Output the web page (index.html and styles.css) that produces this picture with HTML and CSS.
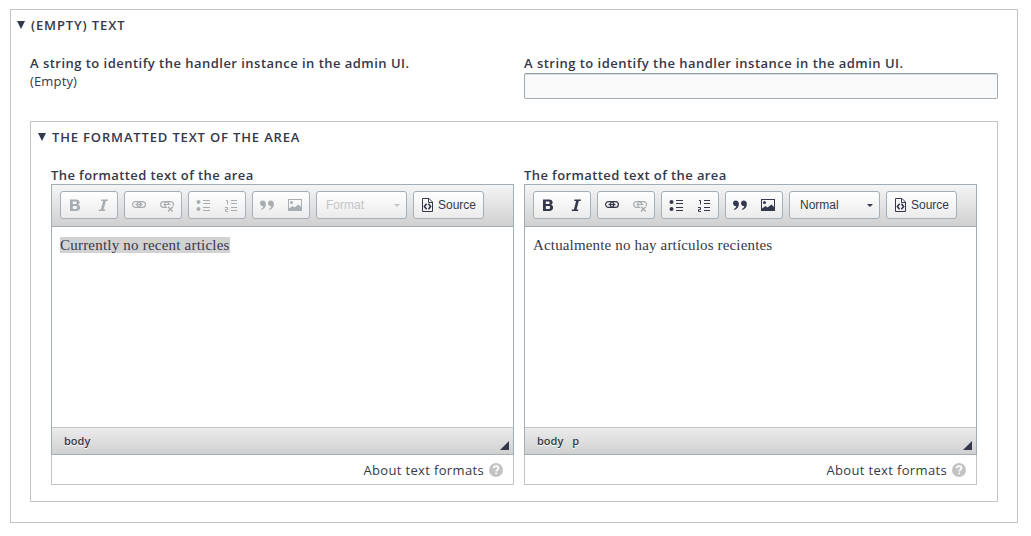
FILE: index.html
```html
<!DOCTYPE html>
<html lang="en">
<head>
<meta charset="utf-8">
<title>Translate view</title>
<link rel="stylesheet" href="styles.css">
</head>
<body>
<svg class="sprite" width="0" height="0">
  <symbol id="bold" viewBox="0 0 16 16"><path fill-rule="evenodd" d="M3 2.500h6c2.400 0 3.600 1.100 3.600 2.900 0 1.200-.6 2-1.600 2.400 1.400.4 2.100 1.400 2.100 2.700 0 2.100-1.500 3.500-4 3.500H3zM5.800 4.600V7h2.400c1 0 1.500-.4 1.500-1.200s-.5-1.200-1.500-1.200zM5.800 9v2.900h2.600c1.100 0 1.700-.5 1.700-1.500S9.500 9 8.400 9z"/></symbol>
  <symbol id="italic" viewBox="0 0 16 16"><path d="M6.500 2.500h6.500l-.4 1.500h-1.800L8.600 12.500h1.800L10 14H3.600l.4-1.500h1.900L8.100 4H6.100z"/></symbol>
  <symbol id="link" viewBox="0 0 16 16"><g fill="none" stroke="currentColor" stroke-width="1.200"><rect x="1.600" y="4.600" width="8.200" height="5.800" rx="2.900"/><rect x="6.200" y="4.600" width="8.200" height="5.800" rx="2.900"/><path d="M4.500 7.500h7"/></g></symbol>
  <symbol id="unlink" viewBox="0 0 16 16"><g fill="none" stroke="currentColor" stroke-width="1.200"><path d="M8 10.400H4.500a2.900 2.900 0 0 1 0-5.800h2.600a2.900 2.900 0 0 1 2.700 2.900M6.500 9.500A2.900 2.900 0 0 1 9.100 4.600h2.600a2.900 2.900 0 0 1 2.300 4.600M4.500 7.500h7"/><path d="M9 9.800l4.700 4.700M13.700 9.800L9 14.500" stroke-width="1.500"/></g></symbol>
  <symbol id="bullets" viewBox="0 0 16 16"><circle cx="3.500" cy="5" r="2"/><circle cx="3.500" cy="12" r="2"/><path d="M8 3h7v1H8zM8 6h7v1H8zM8 10h7v1H8zM8 13h7v1H8z"/></symbol>
  <symbol id="numbers" viewBox="0 0 16 16"><path d="M8 3h6v1H8zM8 6h6v1H8zM8 10h6v1H8zM8 13h6v1H8z"/><path d="M3 3.500h1.500v4M2 10.500h2.500v2h-2v2H5" fill="none" stroke="currentColor"/></symbol>
  <symbol id="quote" viewBox="0 0 16 16"><path d="M3.700 3.500c1.900 0 3.200 1.300 3.200 3.500 0 2.900-1.700 5-4.500 6l-.5-.9c1.400-.7 2.200-1.600 2.400-2.800C2.500 9.300 1 8.200 1 6.300c0-1.600 1.100-2.800 2.700-2.800zM11.700 3.500c1.900 0 3.200 1.300 3.200 3.500 0 2.900-1.700 5-4.500 6l-.5-.9c1.400-.7 2.200-1.600 2.400-2.800C10.500 9.300 9 8.200 9 6.300c0-1.600 1.100-2.800 2.700-2.800z"/></symbol>
  <symbol id="image" viewBox="0 0 16 16"><path fill-rule="evenodd" d="M1 2h14v12H1zM2 3v8.500L5.500 9l2 1.500L11.500 7.500 14 10V3z"/><circle cx="4.500" cy="5.500" r="1.500"/></symbol>
  <symbol id="source" viewBox="0 0 16 16"><path d="M3.500 1.500h6.500l3.500 3.500v9.500h-10zM9.500 1.500v4h4" fill="none" stroke="currentColor"/><path d="M7.600 6.800L5.400 9.500l2.200 2.700M9.400 6.800l2.200 2.700-2.200 2.700" fill="none" stroke="currentColor" stroke-width="1.600"/></symbol>
  <symbol id="help" viewBox="0 0 14 14"><circle cx="7" cy="7" r="7" fill="#c3c3c3"/><path d="M4.700 5.300C4.700 3.900 5.700 3.100 7.100 3.100s2.400.8 2.400 2c0 1.600-2.300 1.700-2.300 3.400" fill="none" stroke="#fff" stroke-width="1.700"/><path d="M6.300 9.600h1.800v1.600H6.300z" fill="#fff"/></symbol>
</svg>
<section class="panel outer">
  <h2 class="title"><span class="arrow"></span><span class="t-empty">(EMPTY) TEXT</span></h2>
  <div class="fields">
    <div class="field"><div class="label l-string">A string to identify the handler instance in the admin UI.</div><div class="value">(Empty)</div></div>
    <div class="field"><label class="label l-string" for="identifier">A string to identify the handler instance in the admin UI.</label><input id="identifier" class="input" type="text"></div>
  </div>
  <section class="panel inner">
    <h2 class="title"><span class="arrow"></span><span class="t-area">THE FORMATTED TEXT OF THE AREA</span></h2>
    <div class="editors">
      <div class="column">
        <div class="label l-area">The formatted text of the area</div>
        <div class="editor readonly">
          <div class="toolbar">
            <div class="group"><svg><use href="#bold"/></svg><svg><use href="#italic"/></svg></div>
            <div class="group"><svg><use href="#link"/></svg><svg><use href="#unlink"/></svg></div>
            <div class="group"><svg><use href="#bullets"/></svg><svg><use href="#numbers"/></svg></div>
            <div class="group"><svg><use href="#quote"/></svg><svg><use href="#image"/></svg></div>
            <div class="group format"><span>Format</span><i class="caret"></i></div>
            <div class="group source"><svg><use href="#source"/></svg><span>Source</span></div>
          </div>
          <div class="content"><span class="marked">Currently no recent articles</span></div>
          <div class="status"><span>body</span><i class="grip"></i></div>
        </div>
        <div class="about"><span>About text formats</span><svg><use href="#help"/></svg></div>
      </div>
      <div class="column">
        <div class="label l-area">The formatted text of the area</div>
        <div class="editor">
          <div class="toolbar">
            <div class="group"><svg><use href="#bold"/></svg><svg><use href="#italic"/></svg></div>
            <div class="group"><svg><use href="#link"/></svg><svg class="off"><use href="#unlink"/></svg></div>
            <div class="group"><svg><use href="#bullets"/></svg><svg><use href="#numbers"/></svg></div>
            <div class="group"><svg><use href="#quote"/></svg><svg><use href="#image"/></svg></div>
            <div class="group format"><span>Normal</span><i class="caret"></i></div>
            <div class="group source"><svg><use href="#source"/></svg><span>Source</span></div>
          </div>
          <div class="content"><span class="spanish">Actualmente no hay artículos recientes</span></div>
          <div class="status"><span>body</span><span>p</span><i class="grip"></i></div>
        </div>
        <div class="about"><span>About text formats</span><svg><use href="#help"/></svg></div>
      </div>
    </div>
  </section>
</section>
</body>
</html>
```
FILE: styles.css
```css
* { box-sizing: border-box; }
body {
  margin: 0;
  padding: 9px 13px 0 10px;
  background: #fff;
  color: #35384b;
  font: 13px/18px "Open Sans", "Noto Sans", sans-serif;
}
.sprite { display: block; height: 0; }
.panel { border: 1px solid #c5c5c5; }
.outer { height: 514px; padding: 0 19px; }
.inner { height: 381px; padding: 0 20px; }
.title {
  display: flex;
  align-items: center;
  height: 31px;
  margin: 0 0 0 -13px;
  padding-bottom: 1px;
  gap: 6px;
  font-size: 13px;
  font-weight: 600;
  white-space: nowrap;
}
.arrow {
  width: 8px;
  height: 8px;
  background: #35384b;
  clip-path: polygon(0 0, 100% 0, 50% 100%);
}
.t-empty { letter-spacing: .87px; }
.t-area { letter-spacing: .84px; }
.fields {
  display: grid;
  grid-template-columns: 474px 474px;
  gap: 20px;
  height: 80px;
  padding-top: 13px;
}
.label {
  display: block;
  height: 19px;
  font-weight: 600;
  line-height: 19px;
  white-space: nowrap;
}
.l-string { letter-spacing: .47px; }
.l-area { letter-spacing: .4px; }
.value { margin-top: -1px; letter-spacing: .15px; }
.input {
  display: block;
  width: 474px;
  height: 26px;
  border: 1px solid #a3acb4;
  border-top-color: #929aa2;
  border-radius: 2px;
  background: #fafafa;
  box-shadow: inset 0 1px 1px #ddd;
}
.editors {
  display: grid;
  grid-template-columns: 463px 453px;
  gap: 10px;
  padding-top: 13px;
}
.column .label { height: 18px; }
.editor { border: 1px solid #a5adb4; }
.toolbar {
  display: flex;
  gap: 6px;
  height: 42px;
  padding: 6px 8px;
  border-bottom: 1px solid #a5adb4;
  background: linear-gradient(#f5f5f5, #cfd0cf);
}
.group {
  display: flex;
  align-items: center;
  justify-content: space-between;
  width: 58px;
  height: 28px;
  padding: 0 6px;
  border: 1px solid #a4afb8;
  border-radius: 3px;
  background: linear-gradient(#fff, #ebebeb);
  font: 12px/16px "Liberation Sans", Arial, sans-serif;
}
.group svg { width: 16px; height: 16px; fill: currentColor; }
.group .off { color: #a8adb1; }
.readonly .group { color: #a8adb1; }
.format { width: 91px; padding: 0 6px 0 10px; }
.readonly .format { padding-left: 9px; color: #c3c5c6; }
.caret {
  border: 3px solid transparent;
  border-top-color: currentColor;
  border-bottom: 0;
}
.source, .readonly .source { width: 71px; padding: 0 7px 0 5px; color: #35384b; }
.content {
  height: 200px;
  padding: 9px 8px;
  font: 15px/18px "Liberation Serif", Georgia, serif;
}
.marked, .spanish { display: inline-block; height: 16px; line-height: 17px; white-space: nowrap; }
.marked { background: #d2d2d2; letter-spacing: .21px; }
.spanish { letter-spacing: .16px; }
.status {
  display: flex;
  gap: 9px;
  height: 27px;
  padding: 0 4px 0 12px;
  border-top: 1px solid #bfc3c5;
  background: linear-gradient(#ececec, #cfd0cf);
  font-size: 11px;
  font-weight: 600;
  line-height: 26px;
  text-shadow: 0 1px #fff;
}
.grip {
  align-self: flex-end;
  width: 9px;
  height: 9px;
  margin: 0 0 4px auto;
  background: #35384b;
  clip-path: polygon(100% 0, 100% 100%, 0 100%);
}
.about {
  display: flex;
  align-items: center;
  justify-content: flex-end;
  gap: 5px;
  height: 30px;
  padding-right: 10px;
  border: 1px solid #c5c5c5;
  border-top: 0;
  letter-spacing: .35px;
}
.about svg { width: 14px; height: 14px; }
```
